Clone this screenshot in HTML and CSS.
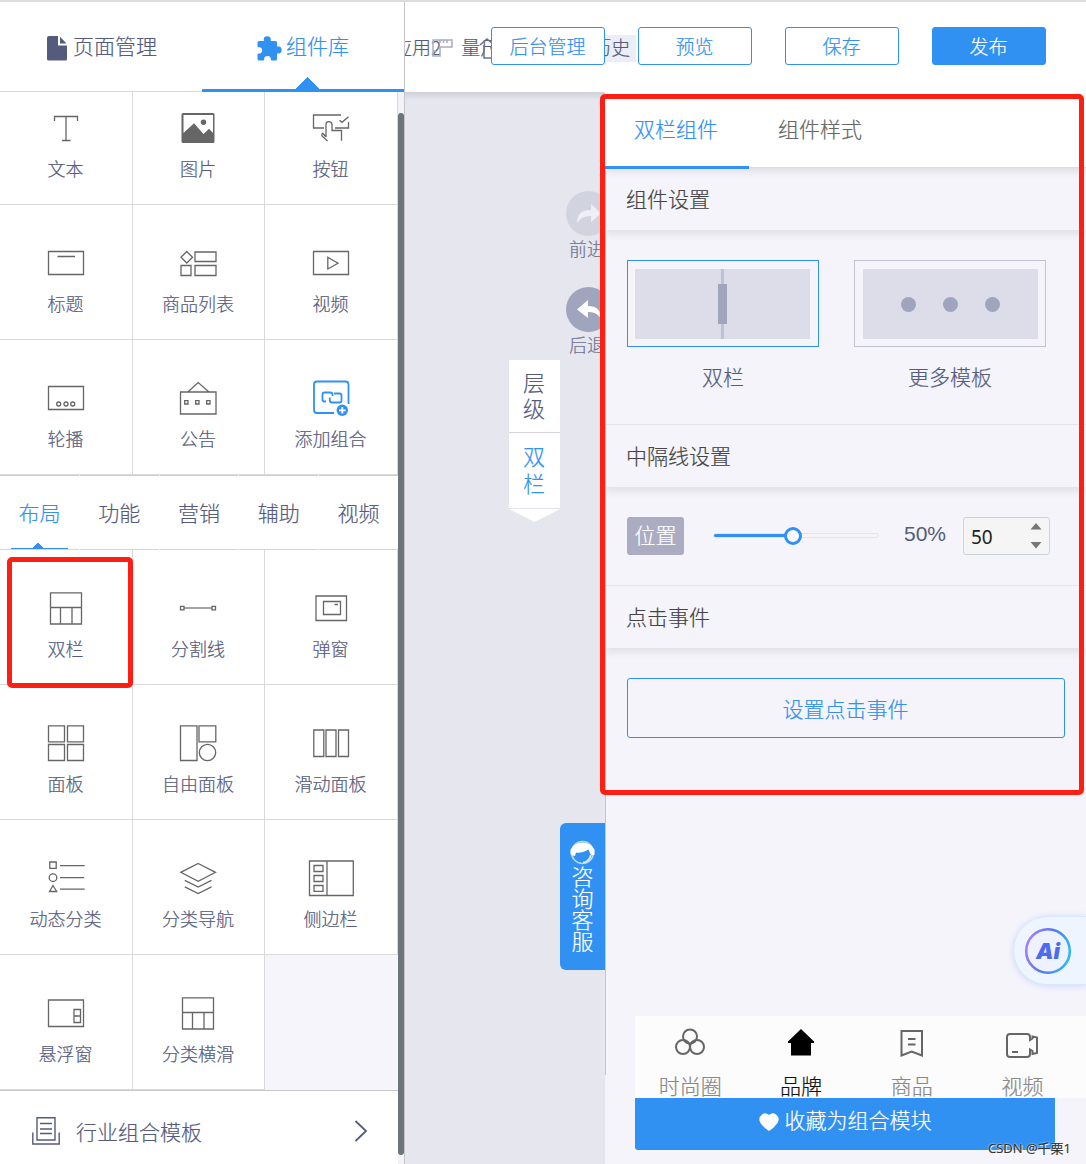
FILE: index.html
```html
<!DOCTYPE html>
<html lang="zh-CN">
<head>
<meta charset="utf-8">
<title>组件库</title>
<link rel="stylesheet" href="styles.css">
</head>
<body>
<div class="app">
  <aside class="library">
    <nav class="main-tabs">
      <div class="main-tab">
        <svg class="tab-icon" width="20" height="25" viewBox="0 0 20 25"><path fill="currentColor" d="M2 0H11V9.500H20V23q0 1.500-1.500 1.500H1.500Q0 24.500 0 23V2Q0 0 2 0ZM13 .8 19.500 7.500H13Z"/></svg>
        <span>页面管理</span>
      </div>
      <div class="main-tab active">
        <svg class="tab-icon puzzle" width="25" height="25" viewBox="0 0 25 25"><path fill="currentColor" d="M2 5H6.500C7 5 7 4.300 6.800 3.600 6.500 1.500 8 .3 10.300.3S14 1.500 13.800 3.600C13.600 4.300 13.600 5 14.300 5H18.500Q20 5 20 6.500V10C20 10.800 20.800 10.700 21.500 10.500 23.500 10.200 24.700 12 24.700 14S23.500 17.600 21.500 17.400C20.800 17.200 20 17.200 20 18V23Q20 24.500 18.500 24.500H14.500C13.500 24.500 13.800 23.500 13.800 22.500 13.500 20.500 12 20 10.500 20S7.300 20.700 7.200 22.500C7.200 23.500 7.300 24.500 6.300 24.500H2Q.5 24.500.5 23V18.500C.5 17.500 1.500 17.800 2.500 17.600 4.300 17.400 5.200 16 5.200 14.500S4.300 11.300 2.500 11.200C1.500 11.200.5 11.500.5 10.500V6.500Q.5 5 2 5Z"/></svg>
        <span>组件库</span>
      </div>
    </nav>
    <div class="library-body">
      <div class="library-list">
        <div class="grid basic">
          <div class="cell"><svg class="icon" viewBox="0 0 48 48"><path d="M12.500 17V12.500H35.500V17M24 12.500V36M20 36.500H28.500"/></svg><span>文本</span></div>
          <div class="cell"><svg class="icon" viewBox="0 0 48 48"><path class="solid" fill-rule="evenodd" d="M9 9H39Q40.500 9 40.500 10.500V37.500Q40.500 39 39 39H9Q7.500 39 7.500 37.500V10.500Q7.500 9 9 9ZM9.500 11V29L20 19.300 29.500 30 35 24.700 39 29V11Z"/><circle class="solid" cx="29.500" cy="18.300" r="2.700"/></svg><span>图片</span></div>
          <div class="cell"><svg class="icon" viewBox="0 0 48 48"><path d="M34 11H6.500V24H17M28 24H41.500V18M32.500 16.300 35 18.300 41.500 12.700M19 33V20.500A3 2.800 0 0 1 25 20.500V26.500H34.500V36.700M19 33 16 29.500Q14.500 29.500 15 32L20.500 37"/></svg><span>按钮</span></div>
          <div class="cell"><svg class="icon" viewBox="0 0 48 48"><path d="M6.500 12.500H41.500V35.500H6.500ZM15.500 17.500H33"/></svg><span>标题</span></div>
          <div class="cell"><svg class="icon" viewBox="0 0 48 48"><path d="M12.800 12.500 18.500 18.300 12.800 24 7 18.300ZM21 13H42V22.500H21ZM7 26.500H17V36.500H7ZM21 26.500H42V36.500H21Z"/></svg><span>商品列表</span></div>
          <div class="cell"><svg class="icon" viewBox="0 0 48 48"><path d="M6.500 12.500H41.500V35.500H6.500ZM20.800 18.300 31 24.200 20.800 30Z"/></svg><span>视频</span></div>
          <div class="cell"><svg class="icon" viewBox="0 0 48 48"><path d="M6.500 12.500H41.500V35.500H6.500Z"/><circle cx="16.700" cy="30" r="2"/><circle cx="24" cy="30" r="2"/><circle cx="30.700" cy="30" r="2"/></svg><span>轮播</span></div>
          <div class="cell"><svg class="icon" viewBox="0 0 48 48"><path d="M6.500 18H42V40H6.500ZM13.800 18 24.200 8.500 35 18M10.700 26.700h3.300v3.300h-3.300ZM21.700 26.700h3.300v3.300h-3.300ZM32.700 26.700h3.300v3.300h-3.300Z"/></svg><span>公告</span></div>
          <div class="cell"><svg class="icon blue" viewBox="0 0 48 48"><path d="M41.500 30V10.500Q41.500 7.500 38.500 7.500H10Q7 7.500 7 10.500V36Q7 39 10 39H27M19 27.500H17.500Q15.500 27.500 15.500 25.500V20.500Q15.500 18.500 17.500 18.500H23Q25.500 18.500 25.500 20.500V22M27 19.500H32.500Q34.500 19.500 34.500 21.500V26.500Q34.500 28.500 32.500 28.500H25Q22.800 28.500 22.800 26.500V23.500"/><circle class="solid" cx="35.300" cy="36.300" r="5.700"/><path class="plus" d="M32 36.300H38.600M35.300 33V39.600"/></svg><span>添加组合</span></div>
        </div>
        <nav class="category-tabs">
          <div class="category active">布局</div>
          <div class="category">功能</div>
          <div class="category">营销</div>
          <div class="category">辅助</div>
          <div class="category">视频</div>
        </nav>
        <div class="grid layout">
          <div class="cell picked"><svg class="icon" viewBox="0 0 48 48"><path d="M8.500 8.800H39.500V40H8.500ZM8.500 23.500H39.500M18.500 23.500V40M30 23.500V40"/></svg><span>双栏</span></div>
          <div class="cell"><svg class="icon" viewBox="0 0 48 48"><path class="pale" d="M10 24H38"/><path d="M6.500 22.300h3.500v3.500H6.500ZM38 22.300h3.500v3.500H38Z"/></svg><span>分割线</span></div>
          <div class="cell"><svg class="icon" viewBox="0 0 48 48"><path d="M9 12H39.500V36.500H9ZM16.500 17.500H33.500V30.500H16.500ZM27.500 20.500H31"/></svg><span>弹窗</span></div>
          <div class="cell"><svg class="icon" viewBox="0 0 48 48"><path d="M6.500 6.800H22.500V22.800H6.500ZM25.500 6.800H41.500V22.800H25.500ZM6.500 25.500H22.500V41.500H6.500ZM25.500 25.500H41.500V41.500H25.500Z"/></svg><span>面板</span></div>
          <div class="cell"><svg class="icon" viewBox="0 0 48 48"><path d="M6.500 6.800H23V41.500H6.500ZM25 6.800H41.800V22.800H25Z"/><circle cx="33.500" cy="33.500" r="8.200"/></svg><span>自由面板</span></div>
          <div class="cell"><svg class="icon" viewBox="0 0 48 48"><path d="M6.800 11H16.800V37.500H6.800ZM19 11H29V37.500H19ZM31.500 11H41.500V37.500H31.500Z"/></svg><span>滑动面板</span></div>
          <div class="cell"><svg class="icon" viewBox="0 0 48 48"><path d="M7.800 8H14.200V14.300H7.800ZM11 31.500 14.700 37.500H7.500ZM18 11.700H42.700M18 23.700H42.200M18 35.200H42.700"/><circle cx="11" cy="23.700" r="3.800"/></svg><span>动态分类</span></div>
          <div class="cell"><svg class="icon" viewBox="0 0 48 48"><path d="M24.200 9.500 41.500 18.300 24.200 27.300 6.800 18.300ZM10.800 26.300 24.200 33 37.500 26.300M10.800 32.800 24.200 39.500 37.500 32.800"/></svg><span>分类导航</span></div>
          <div class="cell"><svg class="icon" viewBox="0 0 48 48"><path d="M2.500 7H46.300V41.500H2.500ZM20 7V41.500M7 11.500H16V17.500H7ZM7 21.500H16V27.500H7ZM7 31.500H16V37.300H7Z"/></svg><span>侧边栏</span></div>
          <div class="cell"><svg class="icon" viewBox="0 0 48 48"><path d="M6.500 11H41.500V37.500H6.500ZM32 20.500H38.500V33.500H32ZM32 27H38.500"/></svg><span>悬浮窗</span></div>
          <div class="cell"><svg class="icon" viewBox="0 0 48 48"><path d="M8.500 8.800H39.500V40H8.500ZM8.500 23.500H39.500M18.500 23.500V40M30 23.500V40"/></svg><span>分类横滑</span></div>
        </div>
        <div class="industry">
          <svg class="industry-icon" width="28" height="28" viewBox="0 0 28 28"><path d="M5 .8H23V23H5ZM8 6.500H20M8 12H20M8 16.500H20M.8 15.500V27H27.200V15.500"/></svg>
          <span>行业组合模板</span>
          <svg class="chevron" width="14" height="22" viewBox="0 0 14 22"><path d="M1.500 1 12 11 1.500 21"/></svg>
        </div>
      </div>
      <div class="scrollbar"><div class="thumb"></div></div>
    </div>
  </aside>

  <div class="editor">
    <header class="topbar">
      <div class="tools">
        <span class="tool">应用2</span>
        <svg class="ruler" width="21" height="18" viewBox="0 0 21 18"><path d="M1 1H20V8H8V17H1ZM8 1V4M11.500 1V4M15 1V4M1 12H4"/></svg>
        <span class="tool measure">量尺</span>
        <svg class="clock" width="20" height="23" viewBox="0 0 20 23"><path d="M1 8 8 2 15 8M5 8V21H16"/></svg>
        <span class="tool history">历史</span>
      </div>
      <div class="actions">
        <button class="btn">后台管理</button>
        <button class="btn">预览</button>
        <button class="btn">保存</button>
        <button class="btn primary">发布</button>
      </div>
    </header>
    <div class="workspace">
      <main class="canvas">
        <div class="step redo">
          <div class="step-disc"><svg width="24" height="20" viewBox="0 0 24 20"><path d="M0 19Q0 6 14 6V0L24 9.500 14 18V12Q5 11.500 0 19Z"/></svg></div>
          <span>前进</span>
        </div>
        <div class="step undo">
          <div class="step-disc"><svg width="24" height="20" viewBox="0 0 24 20"><path d="M24 19Q24 6 11 6V0L0 9.500 11 18V12Q20 11.500 24 19Z"/></svg></div>
          <span>后退</span>
        </div>
        <div class="levels">
          <div class="level">层级</div>
          <div class="level current">双栏</div>
          <div class="levels-tip"></div>
        </div>
        <div class="consult">
          <svg width="25" height="25" viewBox="0 0 25 25"><circle cx="12.500" cy="12.500" r="11" fill="none" stroke="#b9dafb" stroke-width="1.500"/><path fill="#fff" d="M.5 9.500Q5 2.500 12.500 2.500T24.500 9.500V15H21Q19.500 12.500 18.500 9.500 11 13.500 6 12.500L5 16Q2 16 .5 14Z"/><path fill="none" stroke="#d6eafe" stroke-width="2" d="M21 15Q18.500 22.500 13 22.500"/></svg>
          <span>咨询客服</span>
        </div>
      </main>

      <section class="inspector">
        <nav class="inspector-tabs">
          <div class="inspector-tab active">双栏组件</div>
          <div class="inspector-tab">组件样式</div>
        </nav>
        <h2 class="section-title first">组件设置</h2>
        <div class="templates">
          <div class="template selected">
            <div class="frame"><div class="preview split"><i class="divider"></i></div></div>
            <span>双栏</span>
          </div>
          <div class="template">
            <div class="frame"><div class="preview dots"><i></i><i></i><i></i></div></div>
            <span>更多模板</span>
          </div>
        </div>
        <h2 class="section-title">中隔线设置</h2>
        <div class="position-row">
          <span class="tag">位置</span>
          <div class="slider"><div class="slider-fill"></div><div class="knob"></div></div>
          <span class="percent">50%</span>
          <div class="number"><span>50</span>
            <svg width="12" height="26" viewBox="0 0 12 26"><path d="M6 0 11.500 6.500H.5ZM.5 19H11.500L6 25.500Z"/></svg>
          </div>
        </div>
        <h2 class="section-title">点击事件</h2>
        <button class="event-btn">设置点击事件</button>

        <div class="ai">
          <svg width="48" height="48" viewBox="0 0 48 48">
            <defs><linearGradient id="ring" x1="0" y1=".3" x2="1" y2=".6"><stop offset="0" stop-color="#a77ff5"/><stop offset=".5" stop-color="#5377ee"/><stop offset="1" stop-color="#2fb9f2"/></linearGradient></defs>
            <circle cx="24" cy="24" r="21.800" fill="#eef1fe" stroke="url(#ring)" stroke-width="2.600"/>
            <text x="24" y="31.500" text-anchor="middle">Ai</text>
          </svg>
        </div>

        <div class="phone-foot">
          <nav class="phone-nav">
            <div class="phone-item"><svg width="34" height="32" viewBox="0 0 34 32"><circle cx="17" cy="9.500" r="7"/><circle cx="10" cy="20" r="7"/><circle cx="24" cy="20" r="7"/></svg><span>时尚圈</span></div>
            <div class="phone-item active"><svg width="34" height="32" viewBox="0 0 34 32"><path class="home" d="M17 2 30 14.500V16H27V28.500H7V16H4V14.500Z"/></svg><span>品牌</span></div>
            <div class="phone-item"><svg width="34" height="32" viewBox="0 0 34 32"><path d="M6.500 4H27V28.500L16.700 24.500 6.500 28.500ZM13 12H20.500M13 17.500H20.500"/></svg><span>商品</span></div>
            <div class="phone-item"><svg width="34" height="32" viewBox="0 0 34 32"><path d="M5 7H22Q25 7 25 10V13L27.500 11.500V9.500L32 10.500V26L27.500 27V24L25 22.500V27Q25 30 22 30H5Q2 30 2 27V10Q2 7 5 7ZM7 25H13"/></svg><span>视频</span></div>
          </nav>
          <div class="collect">
            <svg width="20" height="18" viewBox="0 0 20 18"><path fill="#fff" d="M10 2Q13.500-1 17 1.500 21.500 5 18.500 10 15 15 10 18 5 15 1.500 10-1.500 5 3 1.500 6.500-1 10 2Z"/></svg>
            <span>收藏为组合模块</span>
          </div>
        </div>
        <div class="highlight"></div>
        <div class="watermark">CSDN @千栗1</div>
      </section>
    </div>
  </div>
</div>
</body>
</html>
```
FILE: styles.css
```css
*, *::before, *::after { box-sizing: border-box; }

body {
  margin: 0;
  font-family: "Noto Sans CJK SC", sans-serif;
  font-weight: 300;
  font-size: 21px;
  color: #555b7c;
  -webkit-text-stroke: .2px;
}

.app {
  display: flex;
  width: 1086px;
  height: 1164px;
  overflow: hidden;
  border-top: 2px solid #dcdcdc;
  background: #fff;
}

/* component library */
.library {
  display: flex;
  flex-direction: column;
  width: 405px;
  flex: none;
  border-right: 1px solid #c6c6c8;
}

.main-tabs {
  display: flex;
  height: 90px;
  border-bottom: 1px solid #d9d9d9;
}

.main-tab {
  position: relative;
  display: flex;
  align-items: center;
  justify-content: center;
  gap: 6px;
  width: 202px;
  line-height: 30px;
  padding: 0 0 3px 2px;
}

.main-tab.active {
  gap: 4px;
  padding-left: 0;
  color: #3091f2;
}

.main-tab.active::after {
  content: "";
  position: absolute;
  left: 0;
  right: 0;
  bottom: -1px;
  height: 15px;
  background: linear-gradient(#3091f2, #3091f2) bottom / 100% 3px no-repeat,
    conic-gradient(from 135deg at 50% 0, #3091f2 90deg, transparent 0) 94px 0 / 24px 12px no-repeat;
}

.tab-icon { margin-top: 7px; }

.library-body {
  display: flex;
  flex: 1;
  min-height: 0;
}

.library-list { width: 398px; }

.grid {
  display: grid;
  grid-template-columns: 133px 132px 133px;
  background: #f5f5fb;
}

.basic { grid-template-rows: 113px 135px 135px; }
.layout { grid-auto-rows: 135px; }

.cell {
  position: relative;
  display: flex;
  flex-direction: column;
  align-items: center;
  justify-content: flex-end;
  gap: 4px;
  padding: 0 1px 24px 0;
  background: #fff;
  border-right: 1px solid #dadada;
  border-bottom: 1px solid #dadada;
  font-size: 18px;
  line-height: 24px;
}

.picked::after {
  content: "";
  position: absolute;
  left: 7px;
  top: 7px;
  width: 126px;
  height: 131px;
  border: 5px solid #ff1f12;
  border-radius: 5px;
  z-index: 2;
}

.icon {
  width: 48px;
  height: 48px;
  fill: none;
  stroke: #666;
  stroke-width: 1.3;
}

.icon .solid { fill: #666; stroke: none; }
.icon .pale { stroke: #999; stroke-width: 1.8; }
.icon.blue { stroke: #3091f2; stroke-width: 1.8; }
.icon.blue .solid { fill: #3091f2; }
.icon .plus { stroke: #fff; }

.category-tabs {
  display: grid;
  grid-template-columns: repeat(5, 1fr);
  height: 75px;
  column-gap: 1px;
}

.category {
  position: relative;
  height: 75px;
  border-top: 1px solid #ccc;
  border-bottom: 1px solid #d6d6d6;
  text-align: center;
  line-height: 72px;
}

.category.active { color: #3091f2; }

.category.active::after {
  content: "";
  position: absolute;
  left: 11px;
  bottom: 0;
  width: 57px;
  height: 7px;
  background: linear-gradient(#3091f2, #3091f2) bottom / 100% 1px no-repeat,
    conic-gradient(from 135deg at 50% 0, #3091f2 90deg, transparent 0) 21px 0 / 12px 6px no-repeat;
}

.industry {
  display: flex;
  align-items: center;
  height: 76px;
  padding: 5px 30px 0 32px;
  border-top: 1px solid #c9c9c9;
  background: #fff;
  line-height: 30px;
}

.industry svg {
  fill: none;
  stroke: #555b7c;
  stroke-width: 1.4;
}

.industry-icon { margin-right: 16px; }
.chevron { margin-left: auto; }
.industry .chevron { stroke-width: 1.8; }

.scrollbar {
  width: 6px;
  padding: 21px 0 9px;
  background: #f2f2f8;
}

.thumb {
  height: 1042px;
  border-radius: 3px;
  background: #6b757c;
}

/* editor */
.editor {
  display: flex;
  flex-direction: column;
  flex: 1;
  min-width: 0;
}

.topbar {
  position: relative;
  z-index: 1;
  flex: none;
  height: 90px;
  padding: 25px 40px 0 86px;
  background: #fff;
}

.tools {
  position: absolute;
  left: 0;
  top: 33px;
  display: flex;
  align-items: center;
  width: 234px;
  height: 27px;
  overflow: hidden;
  font-size: 19px;
}

.tool { flex: none; white-space: nowrap; line-height: 23px; padding-bottom: 4px; margin-left: -12px; }
.ruler, .clock { flex: none; fill: none; stroke: #aaaebf; stroke-width: 1.5; }
.ruler { margin: 0 0 2px -9px; }
.tool.measure { margin-left: 8px; }
.clock { margin-left: -20px; stroke: #6b7189; }
.tool.history {
  margin-left: 87px;
  padding: 0 6px 4px;
  background: #eceef7;
}

.actions {
  position: relative;
  display: flex;
  gap: 33px;
}

.btn {
  flex: 1;
  height: 38px;
  padding: 0 1px 0 0;
  border: 1px solid #3091f2;
  border-radius: 3px;
  background: #fff;
  color: #3091f2;
  font: 300 19px/34px "Noto Sans CJK SC", sans-serif;
}

.btn.primary { background: #3091f2; color: #fff; }

.workspace {
  display: flex;
  flex: 1;
  min-height: 0;
}

.canvas {
  display: flex;
  flex-direction: column;
  align-items: flex-end;
  width: 200px;
  flex: none;
  overflow: hidden;
  padding-top: 99px;
  background: linear-gradient(#cfd0d7, #e5e6ee 8px);
}

.step {
  display: flex;
  flex-direction: column;
  align-items: center;
  width: 45px;
  height: 96px;
  margin-right: -6px;
  font-size: 18px;
  line-height: 24px;
  color: #6f748f;
  white-space: nowrap;
}

.step span { margin-right: 3px; }

.step-disc {
  display: flex;
  align-items: center;
  justify-content: center;
  width: 45px;
  height: 45px;
  border-radius: 50%;
  background: #d1d3df;
}

.step svg { fill: #eeeff5; }
.undo .step-disc { background: #9fa5bc; }
.undo svg { fill: #fff; }
.undo { height: 77px; }

.levels { width: 51px; margin: -4px 45px 0 0; }

.level {
  height: 73px;
  padding: 8px 15px 0 14px;
  border-bottom: 1px solid #d2d3dc;
  background: #fff;
  font-size: 22px;
  line-height: 26px;
  word-break: break-all;
}

.level.current { height: 76px; padding-top: 9px; line-height: 27px; color: #3091f2; border-color: #e3e4ea; }

.levels-tip {
  height: 13px;
  background: #fff;
  clip-path: polygon(0 0, 100% 0, 50% 100%);
}

.consult {
  display: flex;
  flex-direction: column;
  align-items: center;
  width: 45px;
  height: 147px;
  margin-top: 301px;
  padding-top: 17px;
  border-radius: 6px 0 0 6px;
  background: #3091f2;
  color: #fff;
}

.consult svg { flex: none; }

.consult span {
  width: 22px;
  font-size: 22px;
  line-height: 21.5px;
  word-break: break-all;
}

/* inspector */
.inspector {
  position: relative;
  display: flex;
  flex-direction: column;
  flex: 1;
  background: #f4f4fa;
}

.inspector::before {
  content: "";
  position: absolute;
  left: 0;
  top: 0;
  width: 1px;
  height: 983px;
  background: #c5c5d2;
}

.inspector-tabs {
  position: relative;
  display: flex;
  height: 76px;
  border-bottom: 1px solid #dbdbe2;
  background: #fff;
  box-shadow: 0 3px 8px rgba(0, 0, 0, .1);
  color: #666;
}

.inspector-tab {
  height: 77px;
  padding: 0 31px 0 29px;
  line-height: 72px;
}

.inspector-tab.active { color: #3091f2; border-bottom: 3px solid #3091f2; }

.section-title {
  flex: none;
  height: 63px;
  margin: 0 0 1px;
  padding-left: 21px;
  border-top: 1px solid #e4e4ea;
  box-shadow: 0 5px 7px rgba(0, 0, 0, .075);
  color: #444;
  font-size: 21px;
  font-weight: 300;
  line-height: 60px;
}

.section-title.first { height: 62px; border: 0; }

.templates {
  display: flex;
  gap: 35px;
  height: 193px;
  padding: 29px 22px 0;
}

.template {
  display: flex;
  flex-direction: column;
  align-items: center;
  gap: 14px;
  line-height: 30px;
}

.frame {
  width: 192px;
  height: 87px;
  padding: 8px;
  border: 1px solid #c2c2d0;
}

.selected .frame { border-color: #3091f2; padding-left: 7px; }

.preview {
  display: flex;
  align-items: center;
  justify-content: center;
  width: 175px;
  height: 70px;
  background: #dddde9;
}

.split { background: linear-gradient(#bec1d3, #bec1d3) center / 3px 100% no-repeat #dddde9; }
.divider { width: 9px; height: 40px; background: #9fa5bc; }
.dots { gap: 27px; }
.dots i { width: 15px; height: 15px; border-radius: 50%; background: #9fa5bc; }

.position-row {
  display: flex;
  align-items: center;
  height: 97px;
  padding: 0 36px 1px 22px;
}

.tag {
  width: 57px;
  height: 38px;
  border-radius: 3px;
  background: #abacc1;
  color: #fff;
  line-height: 34px;
  text-align: center;
}

.slider {
  position: relative;
  width: 166px;
  height: 5px;
  margin: 0 1px 1px 29px;
  border: 1px solid #e4e4e9;
  border-radius: 3px;
  background: #f5f5f5;
}

.slider-fill {
  width: 78px;
  height: 3px;
  border-radius: 2px;
  background: #3091f2;
}

.knob {
  position: absolute;
  left: 70px;
  top: -7px;
  width: 18px;
  height: 18px;
  border: 3px solid #3091f2;
  border-radius: 50%;
  background: #fff;
}

.percent {
  width: 59px;
  margin-left: 24px;
  padding-bottom: 4px;
  font-family: "Liberation Sans", sans-serif;
  font-size: 21px;
  -webkit-text-stroke: 0;
}

.number {
  display: flex;
  align-items: center;
  justify-content: space-between;
  width: 87px;
  height: 38px;
  padding: 0 7px;
  border: 1px solid #cad4da;
  border-radius: 3px;
  background: #f5f5f5;
  color: #222;
  font: 400 19px/38px "Noto Sans", sans-serif;
  -webkit-text-stroke: 0;
}

.number span { padding-top: 2px; }
.number svg { fill: #777; }

.event-btn {
  flex: none;
  height: 60px;
  margin: 29px 21px 0 22px;
  padding: 0 1px 1px 0;
  border: 1px solid #3091f2;
  border-radius: 3px;
  background: transparent;
  color: #3091f2;
  font: 300 21px/54px "Noto Sans CJK SC", sans-serif;
}

.ai {
  position: absolute;
  right: 0;
  top: 824px;
  width: 73px;
  height: 69px;
  padding: 11px;
  border: 1px solid #d9e8ff;
  border-right: 0;
  border-radius: 35px 0 0 35px;
  background: #eef5ff;
  box-shadow: 0 1px 6px #cbd9f8;
}

.ai svg { margin: -1px 0 0 -1px; }

.ai text {
  fill: #4c6cf0;
  font: italic 900 22px Inter, sans-serif;
}

.phone-foot { margin: auto 0 14px 30px; }

.phone-nav {
  display: grid;
  grid-template-columns: repeat(4, 110.7px);
  height: 82px;
  padding-top: 11px;
  overflow: hidden;
  background: #fcfcfc;
  color: #888;
}

.phone-item {
  display: flex;
  flex-direction: column;
  align-items: center;
  gap: 14px;
  line-height: 24px;
}

.phone-item svg { flex: none; fill: none; stroke: #666; stroke-width: 2; }
.phone-item.active { color: #111; }
.phone-item .home { fill: #000; stroke: none; }

.collect {
  display: flex;
  justify-content: center;
  align-items: center;
  gap: 6px;
  width: 420px;
  height: 52px;
  padding-bottom: 11px;
  border-radius: 0 0 0 3px;
  background: #3091f2;
  color: #fff;
}

.collect svg { margin-top: 6px; }

/* annotation drawn over the inspector */
.highlight {
  position: absolute;
  z-index: 3;
  left: -5px;
  top: 2px;
  width: 484px;
  height: 701px;
  border: 5px solid #ff1f12;
  border-radius: 5px;
}

.watermark {
  position: absolute;
  right: 15px;
  bottom: 6px;
  color: #333;
  font: 400 13px/20px "Open Sans", "Noto Sans CJK SC", sans-serif;
  text-shadow: 0 0 2px #fff, 1px 1px 1px #fff;
}
```
